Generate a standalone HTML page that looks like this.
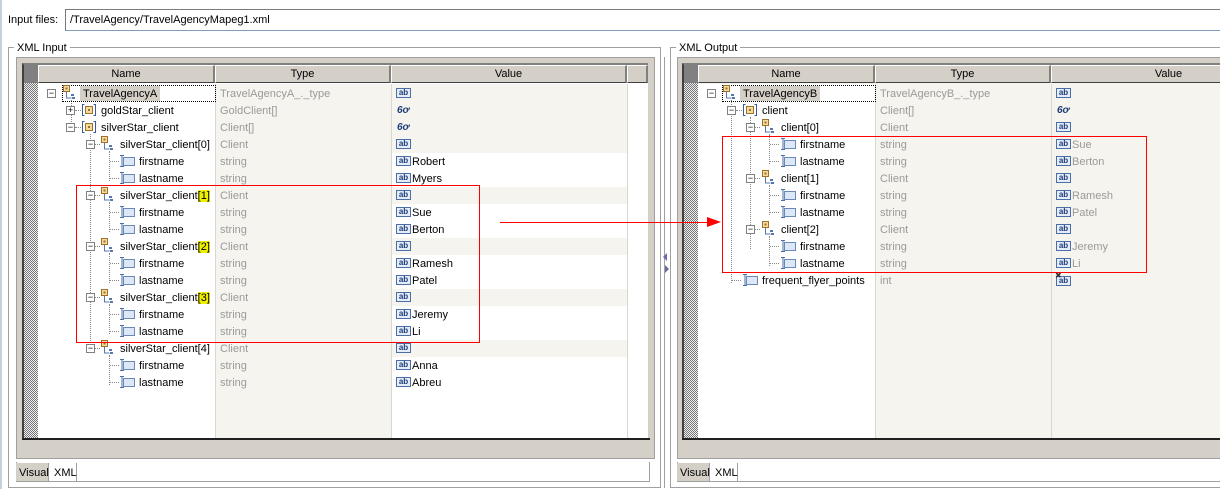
<!DOCTYPE html>
<html><head><meta charset="utf-8"><style>
*{margin:0;padding:0;box-sizing:border-box}
body{width:1220px;height:489px;background:#fff;position:relative;overflow:hidden;font:11px "Liberation Sans",sans-serif;color:#000}
.a{position:absolute}
.t{position:absolute;white-space:nowrap;line-height:17px;height:17px;padding-top:1px}
.g{color:#9a9a9a}
.hd{position:absolute;top:65px;height:18px;background:#d4d0c8;border-top:1px solid #fff;border-left:1px solid #fff;border-right:2px solid #808080;border-bottom:1px solid #404040;text-align:center;line-height:16px}
.tg{position:absolute;width:9px;height:9px;border:1px solid #808080;background:#fff;font-size:9px;line-height:7px;text-align:center;color:#000}
.ab{position:absolute;width:15px;height:10px;border:1px solid #4a6ea8;background:#e6edf8;font-size:8px;line-height:8px;color:#1b3c78;text-align:center;font-weight:bold}
.gl{position:absolute;font-style:italic;font-weight:bold;font-size:10px;color:#1b3c78;line-height:17px}
.chk{background:repeating-conic-gradient(#777 0 25%,#eee 0 50%) 0 0/2px 2px}
.hl{background:#f0f000}
.dh{position:absolute;border-top:1px dotted #888;height:0}
.dv{position:absolute;border-left:1px dotted #888;width:0}
</style></head><body>
<svg width="0" height="0" style="position:absolute">
<defs>
<symbol id="cx" viewBox="0 0 16 16"><rect x="1.5" y="0.5" width="6" height="6" fill="#f4dca0" stroke="#a07028"/><rect x="3.5" y="2.5" width="2" height="2" fill="#a07028"/><path d="M4.5 7v6h5M4.5 9.5h0" stroke="#5678b0" fill="none"/><rect x="9" y="9" width="3" height="2" fill="#5678b0"/><rect x="10" y="12" width="3" height="2" fill="#5678b0"/></symbol>
<symbol id="ar" viewBox="0 0 16 16"><path d="M3.5 2.5h-2v11h2M12.5 2.5h2v11h-2" stroke="#3c5a98" fill="none"/><rect x="4.5" y="4.5" width="7" height="7" fill="#f4dca0" stroke="#a07028"/><rect x="7" y="7" width="2" height="2" fill="#a07028"/></symbol>
<symbol id="lf" viewBox="0 0 16 16"><path d="M1 2.5h4M3 2.5v11M1 13.5h4" stroke="#4a6ea8" fill="none"/><rect x="4.5" y="4.5" width="11" height="8" fill="#dce8f6" stroke="#6a88b8"/></symbol>
</defs></svg>

<!-- top -->
<div class="t" style="left:8px;top:11px">Input files:</div>
<div class="a" style="left:65px;top:9px;width:1160px;height:22px;border:1px solid #7f9db9;border-top-color:#7a7a7a;border-left-color:#7a7a7a"></div>
<div class="t" style="left:70px;top:11px">/TravelAgency/TravelAgencyMapeg1.xml</div>
<div class="a" style="left:0;top:0;width:2px;height:489px;background:#c8d0e0"></div>

<!-- LEFT PANEL -->
<div class="a" style="left:8px;top:47px;width:653px;height:441px;border:1px solid #a0a0a0;box-shadow:inset 1px 1px #fff"></div>
<div class="t" style="left:14px;top:39px;background:#fff;padding:1px 3px 0">XML Input</div>
<div class="a" style="left:16px;top:57px;width:639px;height:402px;background:#d4d0c8;border:1px solid #a0a0a0"></div>
<div class="a" style="left:22px;top:63px;width:626px;height:375px;background:#fff;border-left:2px solid #404040;border-top:2px solid #808080"></div>
<div class="a chk" style="left:24px;top:83px;width:14px;height:355px"></div>
<div class="a" style="left:24px;top:65px;width:14px;height:18px;background:#808080"></div>
<div class="hd" style="left:38px;width:177px">Name</div>
<div class="hd" style="left:215px;width:176px">Type</div>
<div class="hd" style="left:391px;width:236px">Value</div>
<div class="hd" style="left:627px;width:21px"></div>
<div class="a" style="left:215px;top:84px;width:176px;height:354px;background:#f5f4ee"></div>
<div class="a" style="left:391px;top:84px;width:236px;height:354px;background:#f5f4ee"></div>
<div class="a" style="left:627px;top:84px;width:21px;height:354px;background:#fff"></div>
<div class="a" style="left:391px;top:153px;width:236px;height:34px;background:#fff"></div>
<div class="a" style="left:391px;top:204px;width:236px;height:34px;background:#fff"></div>
<div class="a" style="left:391px;top:255px;width:236px;height:34px;background:#fff"></div>
<div class="a" style="left:391px;top:306px;width:236px;height:34px;background:#fff"></div>
<div class="a" style="left:391px;top:357px;width:236px;height:34px;background:#fff"></div>
<div class="a" style="left:391px;top:391px;width:236px;height:47px;background:#fff"></div>
<div class="a" style="left:38px;top:84px;width:610px;height:354px;background:repeating-linear-gradient(to bottom,transparent 0 17px,#d8d8d0 17px 18px);background-size:100% 17px;background-position:0 1px"></div>
<div class="a" style="left:215px;top:84px;width:1px;height:354px;background:#d8d8d0"></div>
<div class="a" style="left:391px;top:84px;width:1px;height:354px;background:#d8d8d0"></div>
<div class="a" style="left:627px;top:84px;width:1px;height:354px;background:#d8d8d0"></div>
<div class="a" style="left:22px;top:438px;width:628px;height:2px;background:#202020"></div>
<div class="a" style="left:16px;top:459px;width:639px;height:1px;background:#fff"></div>
<div class="a" style="left:16px;top:462px;width:634px;height:20px;border:1px solid #a0a0a0;border-top:none"></div>
<div class="a" style="left:16px;top:463px;width:33px;height:18px;background:#d4d0c8;border-right:1px solid #a0a0a0"></div>
<div class="t" style="left:19px;top:464px">Visual</div>
<div class="a" style="left:49px;top:463px;width:28px;height:18px;border-right:1px solid #a0a0a0"></div>
<div class="t" style="left:54px;top:464px">XML</div>

<div class="dv" style="left:71px;top:100px;height:30px"></div>
<div class="dv" style="left:90px;top:134px;height:217px"></div>
<div class="dv" style="left:109px;top:151px;height:30px"></div>
<div class="dv" style="left:109px;top:202px;height:30px"></div>
<div class="dv" style="left:109px;top:253px;height:30px"></div>
<div class="dv" style="left:109px;top:304px;height:30px"></div>
<div class="dv" style="left:109px;top:355px;height:30px"></div>

<div class="a" style="left:62px;top:85px;width:154px;height:17px;border:1px dotted #000"></div>
<div class="a" style="left:80px;top:86px;width:80px;height:15px;background:#d4d0c8"></div>
<div class="tg" style="left:47px;top:89px">−</div><svg class="a" style="left:62px;top:85px" width="16" height="16"><use href="#cx"/></svg><div class="t" style="left:83px;top:85px">TravelAgencyA</div><div class="t g" style="left:220px;top:85px">TravelAgencyA_._type</div><div class="ab" style="left:396px;top:88px">ab</div>

<div class="tg" style="left:66px;top:106px">+</div><div class="dh" style="left:75px;top:110px;width:6px"></div><svg class="a" style="left:81px;top:102px" width="16" height="16"><use href="#ar"/></svg><div class="t" style="left:101px;top:102px">goldStar_client</div><div class="t g" style="left:220px;top:102px">GoldClient[]</div><div class="gl" style="left:397px;top:102px">6ơ</div>

<div class="tg" style="left:66px;top:123px">−</div><div class="dh" style="left:75px;top:127px;width:6px"></div><svg class="a" style="left:81px;top:119px" width="16" height="16"><use href="#ar"/></svg><div class="t" style="left:101px;top:119px">silverStar_client</div><div class="t g" style="left:220px;top:119px">Client[]</div><div class="gl" style="left:397px;top:119px">6ơ</div>

<div class="tg" style="left:86px;top:140px">−</div><div class="dh" style="left:95px;top:144px;width:5px"></div><svg class="a" style="left:100px;top:136px" width="16" height="16"><use href="#cx"/></svg><div class="t" style="left:120px;top:136px">silverStar_client[0]</div><div class="t g" style="left:220px;top:136px">Client</div><div class="ab" style="left:396px;top:139px">ab</div>
<div class="dh" style="left:110px;top:161px;width:9px"></div><svg class="a" style="left:119px;top:153px" width="16" height="16"><use href="#lf"/></svg><div class="t" style="left:139px;top:153px">firstname</div><div class="t g" style="left:220px;top:153px">string</div><div class="ab" style="left:396px;top:156px">ab</div><div class="t" style="left:412px;top:153px">Robert</div>
<div class="dh" style="left:110px;top:178px;width:9px"></div><svg class="a" style="left:119px;top:170px" width="16" height="16"><use href="#lf"/></svg><div class="t" style="left:139px;top:170px">lastname</div><div class="t g" style="left:220px;top:170px">string</div><div class="ab" style="left:396px;top:173px">ab</div><div class="t" style="left:412px;top:170px">Myers</div>

<div class="tg" style="left:86px;top:191px">−</div><div class="dh" style="left:95px;top:195px;width:5px"></div><svg class="a" style="left:100px;top:187px" width="16" height="16"><use href="#cx"/></svg><div class="t" style="left:120px;top:187px">silverStar_client<span class="hl">[1]</span></div><div class="t g" style="left:220px;top:187px">Client</div><div class="ab" style="left:396px;top:190px">ab</div>
<div class="dh" style="left:110px;top:212px;width:9px"></div><svg class="a" style="left:119px;top:204px" width="16" height="16"><use href="#lf"/></svg><div class="t" style="left:139px;top:204px">firstname</div><div class="t g" style="left:220px;top:204px">string</div><div class="ab" style="left:396px;top:207px">ab</div><div class="t" style="left:412px;top:204px">Sue</div>
<div class="dh" style="left:110px;top:229px;width:9px"></div><svg class="a" style="left:119px;top:221px" width="16" height="16"><use href="#lf"/></svg><div class="t" style="left:139px;top:221px">lastname</div><div class="t g" style="left:220px;top:221px">string</div><div class="ab" style="left:396px;top:224px">ab</div><div class="t" style="left:412px;top:221px">Berton</div>

<div class="tg" style="left:86px;top:242px">−</div><div class="dh" style="left:95px;top:246px;width:5px"></div><svg class="a" style="left:100px;top:238px" width="16" height="16"><use href="#cx"/></svg><div class="t" style="left:120px;top:238px">silverStar_client<span class="hl">[2]</span></div><div class="t g" style="left:220px;top:238px">Client</div><div class="ab" style="left:396px;top:241px">ab</div>
<div class="dh" style="left:110px;top:263px;width:9px"></div><svg class="a" style="left:119px;top:255px" width="16" height="16"><use href="#lf"/></svg><div class="t" style="left:139px;top:255px">firstname</div><div class="t g" style="left:220px;top:255px">string</div><div class="ab" style="left:396px;top:258px">ab</div><div class="t" style="left:412px;top:255px">Ramesh</div>
<div class="dh" style="left:110px;top:280px;width:9px"></div><svg class="a" style="left:119px;top:272px" width="16" height="16"><use href="#lf"/></svg><div class="t" style="left:139px;top:272px">lastname</div><div class="t g" style="left:220px;top:272px">string</div><div class="ab" style="left:396px;top:275px">ab</div><div class="t" style="left:412px;top:272px">Patel</div>

<div class="tg" style="left:86px;top:293px">−</div><div class="dh" style="left:95px;top:297px;width:5px"></div><svg class="a" style="left:100px;top:289px" width="16" height="16"><use href="#cx"/></svg><div class="t" style="left:120px;top:289px">silverStar_client<span class="hl">[3]</span></div><div class="t g" style="left:220px;top:289px">Client</div><div class="ab" style="left:396px;top:292px">ab</div>
<div class="dh" style="left:110px;top:314px;width:9px"></div><svg class="a" style="left:119px;top:306px" width="16" height="16"><use href="#lf"/></svg><div class="t" style="left:139px;top:306px">firstname</div><div class="t g" style="left:220px;top:306px">string</div><div class="ab" style="left:396px;top:309px">ab</div><div class="t" style="left:412px;top:306px">Jeremy</div>
<div class="dh" style="left:110px;top:331px;width:9px"></div><svg class="a" style="left:119px;top:323px" width="16" height="16"><use href="#lf"/></svg><div class="t" style="left:139px;top:323px">lastname</div><div class="t g" style="left:220px;top:323px">string</div><div class="ab" style="left:396px;top:326px">ab</div><div class="t" style="left:412px;top:323px">Li</div>

<div class="tg" style="left:86px;top:344px">−</div><div class="dh" style="left:95px;top:348px;width:5px"></div><svg class="a" style="left:100px;top:340px" width="16" height="16"><use href="#cx"/></svg><div class="t" style="left:120px;top:340px">silverStar_client[4]</div><div class="t g" style="left:220px;top:340px">Client</div><div class="ab" style="left:396px;top:343px">ab</div>
<div class="dh" style="left:110px;top:365px;width:9px"></div><svg class="a" style="left:119px;top:357px" width="16" height="16"><use href="#lf"/></svg><div class="t" style="left:139px;top:357px">firstname</div><div class="t g" style="left:220px;top:357px">string</div><div class="ab" style="left:396px;top:360px">ab</div><div class="t" style="left:412px;top:357px">Anna</div>
<div class="dh" style="left:110px;top:382px;width:9px"></div><svg class="a" style="left:119px;top:374px" width="16" height="16"><use href="#lf"/></svg><div class="t" style="left:139px;top:374px">lastname</div><div class="t g" style="left:220px;top:374px">string</div><div class="ab" style="left:396px;top:377px">ab</div><div class="t" style="left:412px;top:374px">Abreu</div>

<!-- splitter -->
<div class="a" style="left:664px;top:57px;width:1px;height:431px;background:#a0a0a0"></div>
<div class="a" style="left:663px;top:253px;width:0;height:0;border:4px solid transparent;border-right:4px solid #6a6aa8;border-left:none"></div>
<div class="a" style="left:665px;top:265px;width:0;height:0;border:4px solid transparent;border-left:4px solid #6a6aa8;border-right:none"></div>

<!-- RIGHT PANEL -->
<div class="a" style="left:670px;top:47px;width:560px;height:441px;border:1px solid #a0a0a0;box-shadow:inset 1px 1px #fff"></div>
<div class="t" style="left:676px;top:39px;background:#fff;padding:1px 3px 0">XML Output</div>
<div class="a" style="left:677px;top:57px;width:560px;height:402px;background:#d4d0c8;border:1px solid #a0a0a0"></div>
<div class="a" style="left:682px;top:63px;width:560px;height:375px;background:#f5f4ee;border-left:2px solid #404040;border-top:2px solid #808080"></div>
<div class="a chk" style="left:684px;top:83px;width:14px;height:355px"></div>
<div class="a" style="left:684px;top:65px;width:14px;height:18px;background:#808080"></div>
<div class="hd" style="left:698px;width:177px">Name</div>
<div class="hd" style="left:875px;width:176px">Type</div>
<div class="hd" style="left:1051px;width:236px">Value</div>
<div class="a" style="left:698px;top:84px;width:177px;height:354px;background:#fff"></div>
<div class="a" style="left:698px;top:84px;width:530px;height:354px;background:repeating-linear-gradient(to bottom,transparent 0 17px,#d8d8d0 17px 18px);background-size:100% 17px;background-position:0 1px"></div>
<div class="a" style="left:875px;top:84px;width:1px;height:354px;background:#d8d8d0"></div>
<div class="a" style="left:1051px;top:84px;width:1px;height:354px;background:#d8d8d0"></div>
<div class="a" style="left:682px;top:438px;width:560px;height:2px;background:#202020"></div>
<div class="a" style="left:677px;top:459px;width:560px;height:1px;background:#fff"></div>
<div class="a" style="left:677px;top:462px;width:560px;height:20px;border:1px solid #a0a0a0;border-top:none"></div>
<div class="a" style="left:677px;top:463px;width:33px;height:18px;background:#d4d0c8;border-right:1px solid #a0a0a0"></div>
<div class="t" style="left:680px;top:464px">Visual</div>
<div class="a" style="left:710px;top:463px;width:28px;height:18px;border-right:1px solid #a0a0a0"></div>
<div class="t" style="left:715px;top:464px">XML</div>

<div class="dv" style="left:731px;top:100px;height:183px"></div>
<div class="dv" style="left:750px;top:117px;height:132px"></div>
<div class="dv" style="left:769px;top:134px;height:30px"></div>
<div class="dv" style="left:769px;top:185px;height:30px"></div>
<div class="dv" style="left:769px;top:236px;height:30px"></div>

<div class="a" style="left:722px;top:85px;width:154px;height:17px;border:1px dotted #000"></div>
<div class="a" style="left:740px;top:86px;width:80px;height:15px;background:#d4d0c8"></div>
<div class="tg" style="left:707px;top:89px">−</div><svg class="a" style="left:722px;top:85px" width="16" height="16"><use href="#cx"/></svg><div class="t" style="left:743px;top:85px">TravelAgencyB</div><div class="t g" style="left:880px;top:85px">TravelAgencyB_._type</div><div class="ab" style="left:1056px;top:88px">ab</div>

<div class="tg" style="left:727px;top:106px">−</div><div class="dh" style="left:736px;top:110px;width:6px"></div><svg class="a" style="left:742px;top:102px" width="16" height="16"><use href="#ar"/></svg><div class="t" style="left:762px;top:102px">client</div><div class="t g" style="left:880px;top:102px">Client[]</div><div class="gl" style="left:1057px;top:102px">6ơ</div>

<div class="tg" style="left:746px;top:123px">−</div><div class="dh" style="left:755px;top:127px;width:5px"></div><svg class="a" style="left:761px;top:119px" width="16" height="16"><use href="#cx"/></svg><div class="t" style="left:781px;top:119px">client[0]</div><div class="t g" style="left:880px;top:119px">Client</div><div class="ab" style="left:1056px;top:122px">ab</div>
<div class="dh" style="left:770px;top:144px;width:9px"></div><svg class="a" style="left:780px;top:136px" width="16" height="16"><use href="#lf"/></svg><div class="t" style="left:800px;top:136px">firstname</div><div class="t g" style="left:880px;top:136px">string</div><div class="ab" style="left:1056px;top:139px">ab</div><div class="t g" style="left:1072px;top:136px">Sue</div>
<div class="dh" style="left:770px;top:161px;width:9px"></div><svg class="a" style="left:780px;top:153px" width="16" height="16"><use href="#lf"/></svg><div class="t" style="left:800px;top:153px">lastname</div><div class="t g" style="left:880px;top:153px">string</div><div class="ab" style="left:1056px;top:156px">ab</div><div class="t g" style="left:1072px;top:153px">Berton</div>

<div class="tg" style="left:746px;top:174px">−</div><div class="dh" style="left:755px;top:178px;width:5px"></div><svg class="a" style="left:761px;top:170px" width="16" height="16"><use href="#cx"/></svg><div class="t" style="left:781px;top:170px">client[1]</div><div class="t g" style="left:880px;top:170px">Client</div><div class="ab" style="left:1056px;top:173px">ab</div>
<div class="dh" style="left:770px;top:195px;width:9px"></div><svg class="a" style="left:780px;top:187px" width="16" height="16"><use href="#lf"/></svg><div class="t" style="left:800px;top:187px">firstname</div><div class="t g" style="left:880px;top:187px">string</div><div class="ab" style="left:1056px;top:190px">ab</div><div class="t g" style="left:1072px;top:187px">Ramesh</div>
<div class="dh" style="left:770px;top:212px;width:9px"></div><svg class="a" style="left:780px;top:204px" width="16" height="16"><use href="#lf"/></svg><div class="t" style="left:800px;top:204px">lastname</div><div class="t g" style="left:880px;top:204px">string</div><div class="ab" style="left:1056px;top:207px">ab</div><div class="t g" style="left:1072px;top:204px">Patel</div>

<div class="tg" style="left:746px;top:225px">−</div><div class="dh" style="left:755px;top:229px;width:5px"></div><svg class="a" style="left:761px;top:221px" width="16" height="16"><use href="#cx"/></svg><div class="t" style="left:781px;top:221px">client[2]</div><div class="t g" style="left:880px;top:221px">Client</div><div class="ab" style="left:1056px;top:224px">ab</div>
<div class="dh" style="left:770px;top:246px;width:9px"></div><svg class="a" style="left:780px;top:238px" width="16" height="16"><use href="#lf"/></svg><div class="t" style="left:800px;top:238px">firstname</div><div class="t g" style="left:880px;top:238px">string</div><div class="ab" style="left:1056px;top:241px">ab</div><div class="t g" style="left:1072px;top:238px">Jeremy</div>
<div class="dh" style="left:770px;top:263px;width:9px"></div><svg class="a" style="left:780px;top:255px" width="16" height="16"><use href="#lf"/></svg><div class="t" style="left:800px;top:255px">lastname</div><div class="t g" style="left:880px;top:255px">string</div><div class="ab" style="left:1056px;top:258px">ab</div><div class="t g" style="left:1072px;top:255px">Li</div>

<div class="dh" style="left:732px;top:280px;width:9px"></div><svg class="a" style="left:742px;top:272px" width="16" height="16"><use href="#lf"/></svg><div class="t" style="left:762px;top:272px">frequent_flyer_points</div><div class="t g" style="left:880px;top:272px">int</div><div class="ab" style="left:1056px;top:276px">ab</div><div class="a" style="left:1055px;top:272px;font-size:8px;line-height:8px;color:#333">✖</div>

<!-- red annotations -->
<div class="a" style="left:76px;top:185px;width:404px;height:158px;border:1px solid #f00"></div>
<div class="a" style="left:722px;top:136px;width:425px;height:137px;border:1px solid #f00"></div>
<div class="a" style="left:500px;top:222px;width:208px;height:1px;background:#f00"></div>
<div class="a" style="left:707px;top:217px;width:0;height:0;border-top:5px solid transparent;border-bottom:5px solid transparent;border-left:14px solid #f00"></div>
</body></html>
